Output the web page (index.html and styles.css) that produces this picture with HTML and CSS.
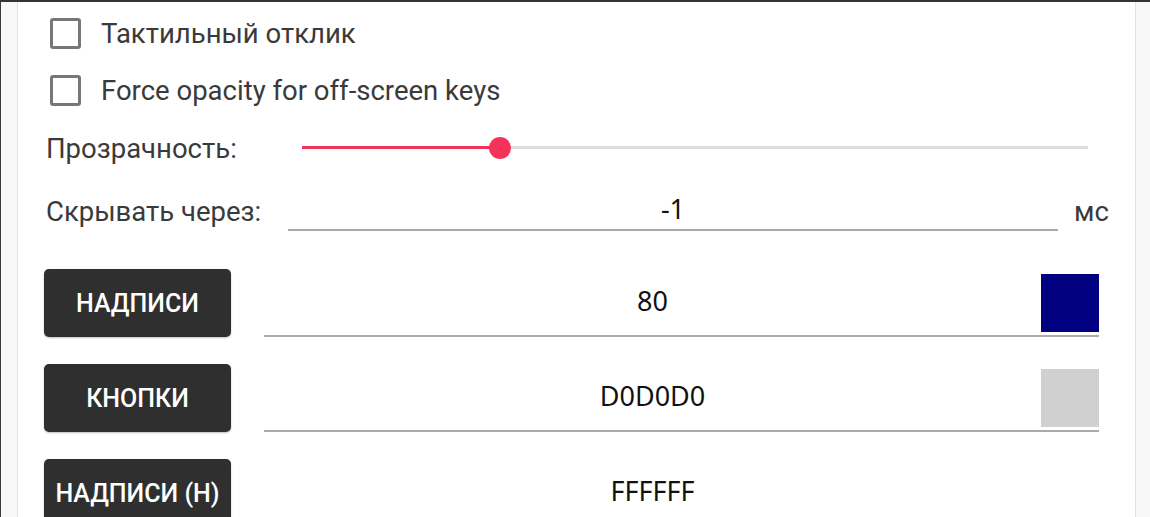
FILE: index.html
```html
<!DOCTYPE html>
<html lang="ru">
<head>
<meta charset="utf-8">
<title>Settings</title>
<link rel="stylesheet" href="styles.css">
</head>
<body>
<div class="frame">
  <div class="gutter gutter-left"></div>
  <main class="panel">
    <label class="check-row">
      <span class="checkbox"></span>
      <span class="check-text">Тактильный отклик</span>
    </label>
    <label class="check-row">
      <span class="checkbox"></span>
      <span class="check-text">Force opacity for off-screen keys</span>
    </label>
    <div class="slider-row">
      <span class="label label-slider">Прозрачность:</span>
      <div class="slider">
        <div class="track"></div>
        <div class="track-fill" style="width: 198px"></div>
        <div class="thumb" style="left: 198px"></div>
      </div>
    </div>
    <div class="hide-row">
      <span class="label label-hide">Скрывать через:</span>
      <div class="hide-input">-1</div>
      <span class="unit">мс</span>
    </div>
    <div class="color-row">
      <button class="color-btn">НАДПИСИ</button>
      <div class="color-field">
        <div class="color-value">80</div>
        <div class="swatch swatch-navy"></div>
      </div>
    </div>
    <div class="color-row">
      <button class="color-btn">КНОПКИ</button>
      <div class="color-field">
        <div class="color-value">D0D0D0</div>
        <div class="swatch swatch-gray"></div>
      </div>
    </div>
    <div class="color-row">
      <button class="color-btn">НАДПИСИ (Н)</button>
      <div class="color-field">
        <div class="color-value">FFFFFF</div>
        <div class="swatch swatch-white"></div>
      </div>
    </div>
  </main>
  <div class="gutter gutter-right"></div>
</div>
</body>
</html>
```

FILE: styles.css
```css
* { box-sizing: border-box; }
html, body {
  margin: 0;
  padding: 0;
  width: 1150px;
  height: 517px;
  overflow: hidden;
  background: #f8f8f8;
}
.frame {
  display: flex;
  width: 1150px;
  height: 517px;
  border-top: 2px solid #333333;
  border-left: 1px solid #3a3a3a;
  overflow: hidden;
}
.gutter {
  background: #f8f8f8;
  flex: none;
}
.gutter-left {
  width: 17px;
  border-right: 1px solid #e2e2e2;
}
.gutter-right {
  width: 15px;
  border-left: 1px solid #e2e2e2;
}
.panel {
  flex: 1;
  background: #ffffff;
  padding: 3px 36px 0 26px;
  display: flex;
  flex-direction: column;
  overflow: hidden;
  font-family: Roboto, "Liberation Sans", sans-serif;
  color: #3a3a3a;
}
.panel > * { flex: none; }
.check-row {
  display: flex;
  align-items: center;
  height: 57px;
  padding-left: 6px;
}
.checkbox {
  width: 31px;
  height: 31px;
  border: 3px solid #777777;
  border-radius: 3px;
  flex: none;
}
.check-text {
  margin-left: 20px;
  font-size: 27.5px;
}
.label {
  font-size: 27.5px;
  padding-left: 2px;
  flex: none;
}
.slider-row {
  display: flex;
  align-items: center;
  height: 58px;
}
.label-slider { width: 258px; }
.slider {
  position: relative;
  flex: none;
  width: 786px;
  height: 22px;
}
.track {
  position: absolute;
  left: 0;
  right: 0;
  top: 9px;
  height: 3px;
  background: #dddddd;
}
.track-fill {
  position: absolute;
  left: 0;
  top: 9px;
  height: 3px;
  background: #f5325a;
}
.thumb {
  position: absolute;
  top: 0;
  width: 22px;
  height: 22px;
  margin-left: -11px;
  border-radius: 50%;
  background: #f5325a;
}
.hide-row {
  display: flex;
  align-items: center;
  height: 56px;
  padding-top: 12px;
  margin-right: -10px;
}
.label-hide { width: 244px; }
.hide-input {
  width: 770px;
  height: 40px;
  border-bottom: 2px solid #aaaaaa;
  text-align: center;
  font-family: "Noto Sans", "Open Sans", sans-serif;
  font-size: 27px;
  line-height: 36px;
  color: #111111;
}
.unit {
  margin-left: 16px;
  font-size: 27.5px;
}
.color-row {
  display: flex;
  height: 68px;
  margin-top: 27px;
  gap: 33px;
}
.hide-row + .color-row { margin-top: 36px; }
.color-btn {
  width: 187px;
  height: 68px;
  flex: none;
  border: none;
  border-radius: 5px;
  background: #2f2f2f;
  color: #ffffff;
  font-family: Roboto, "Liberation Sans", sans-serif;
  font-weight: 500;
  font-size: 25px;
  padding: 0;
  box-shadow: 0 1px 2px rgba(0, 0, 0, 0.25);
}
.color-field {
  flex: 1;
  display: flex;
  align-items: flex-end;
  border-bottom: 2px solid #aaaaaa;
  padding-bottom: 3px;
}
.color-value {
  flex: 1;
  align-self: center;
  text-align: center;
  font-family: "Noto Sans", "Open Sans", sans-serif;
  font-size: 27px;
  color: #111111;
}
.swatch {
  width: 58px;
  height: 58px;
  flex: none;
}
.swatch-navy { background: #000080; }
.swatch-gray { background: #d0d0d0; }
.swatch-white { background: #ffffff; }
```
